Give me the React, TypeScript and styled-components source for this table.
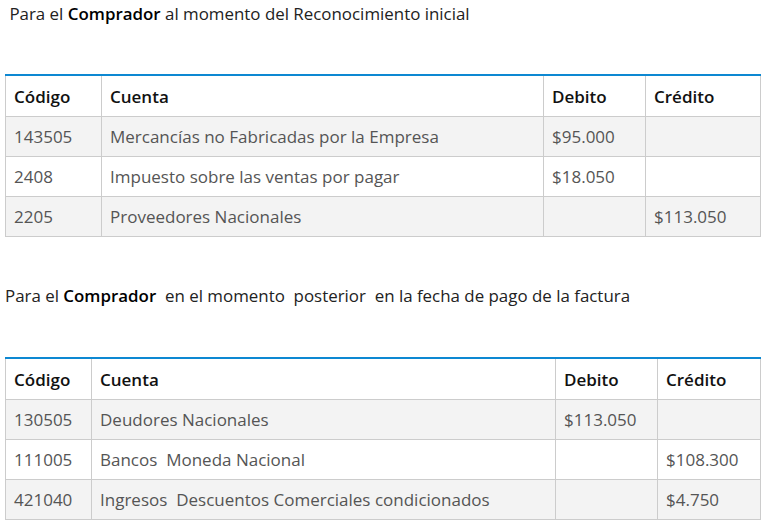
import React from "react";
import styled, { createGlobalStyle } from "styled-components";

const GlobalStyle = createGlobalStyle`
  html, body {
    margin: 0;
    padding: 0;
    background: #ffffff;
  }
  body {
    font-family: "Open Sans", "Liberation Sans", sans-serif;
    font-size: 17px;
    color: #222222;
  }
`;

const Page = styled.div`
  display: flex;
  flex-direction: column;
  padding: 2px 4px 0 5px;
`;

const Intro = styled.p<{ $mb: number }>`
  margin: 0 0 ${(p) => p.$mb}px 0;
  font-size: 16.9px;
  line-height: 24px;
  color: #222222;
  white-space: pre-wrap;
`;

const Strong = styled.strong`
  font-weight: 600;
  color: #000000;
`;

const Table = styled.table<{ $mb: number }>`
  width: 755px;
  border-collapse: collapse;
  table-layout: fixed;
  border-top: 2px solid #0d88d2;
  margin-bottom: ${(p) => p.$mb}px;
`;

const HeadCell = styled.th`
  text-align: left;
  font-weight: 600;
  color: #111111;
  font-size: 17px;
  line-height: 23px;
  padding: 9px 8px 8px 8px;
  border: 1px solid #cccccc;
  border-top: none;
  background: #ffffff;
`;

const Row = styled.tr<{ $striped: boolean }>`
  background: ${(p) => (p.$striped ? "#f3f3f3" : "#ffffff")};
`;

const Cell = styled.td`
  text-align: left;
  color: #555555;
  font-size: 17px;
  line-height: 23px;
  padding: 8px;
  border: 1px solid #cccccc;
  white-space: pre-wrap;
`;

type Entry = [string, string, string, string];

const table1: Entry[] = [
  ["143505", "Mercancías no Fabricadas por la Empresa", "$95.000", ""],
  ["2408", "Impuesto sobre las ventas por pagar", "$18.050", ""],
  ["2205", "Proveedores Nacionales", "", "$113.050"],
];

const table2: Entry[] = [
  ["130505", "Deudores Nacionales", "$113.050", ""],
  ["111005", "Bancos  Moneda Nacional", "", "$108.300"],
  ["421040", "Ingresos  Descuentos Comerciales condicionados", "", "$4.750"],
];

const Ledger: React.FC<{ rows: Entry[]; widths: number[]; mb: number }> = ({
  rows,
  widths,
  mb,
}) => (
  <Table $mb={mb}>
    <colgroup>
      {widths.map((w, i) => (
        <col key={i} style={{ width: w }} />
      ))}
    </colgroup>
    <thead>
      <tr>
        <HeadCell>Código</HeadCell>
        <HeadCell>Cuenta</HeadCell>
        <HeadCell>Debito</HeadCell>
        <HeadCell>Crédito</HeadCell>
      </tr>
    </thead>
    <tbody>
      {rows.map((r, i) => (
        <Row key={i} $striped={i % 2 === 0}>
          {r.map((c, j) => (
            <Cell key={j}>{c}</Cell>
          ))}
        </Row>
      ))}
    </tbody>
  </Table>
);

export default function App() {
  return (
    <>
      <GlobalStyle />
      <Page>
        <Intro $mb={48}>
          {" Para el "}
          <Strong>Comprador</Strong>
          {" al momento del Reconocimiento inicial"}
        </Intro>
        <Ledger rows={table1} widths={[96, 442, 102, 115]} mb={47} />
        <Intro $mb={49}>
          {"Para el "}
          <Strong>Comprador</Strong>
          {"  en el momento  posterior  en la fecha de pago de la factura"}
        </Intro>
        <Ledger rows={table2} widths={[86, 464, 102, 103]} mb={0} />
      </Page>
    </>
  );
}
